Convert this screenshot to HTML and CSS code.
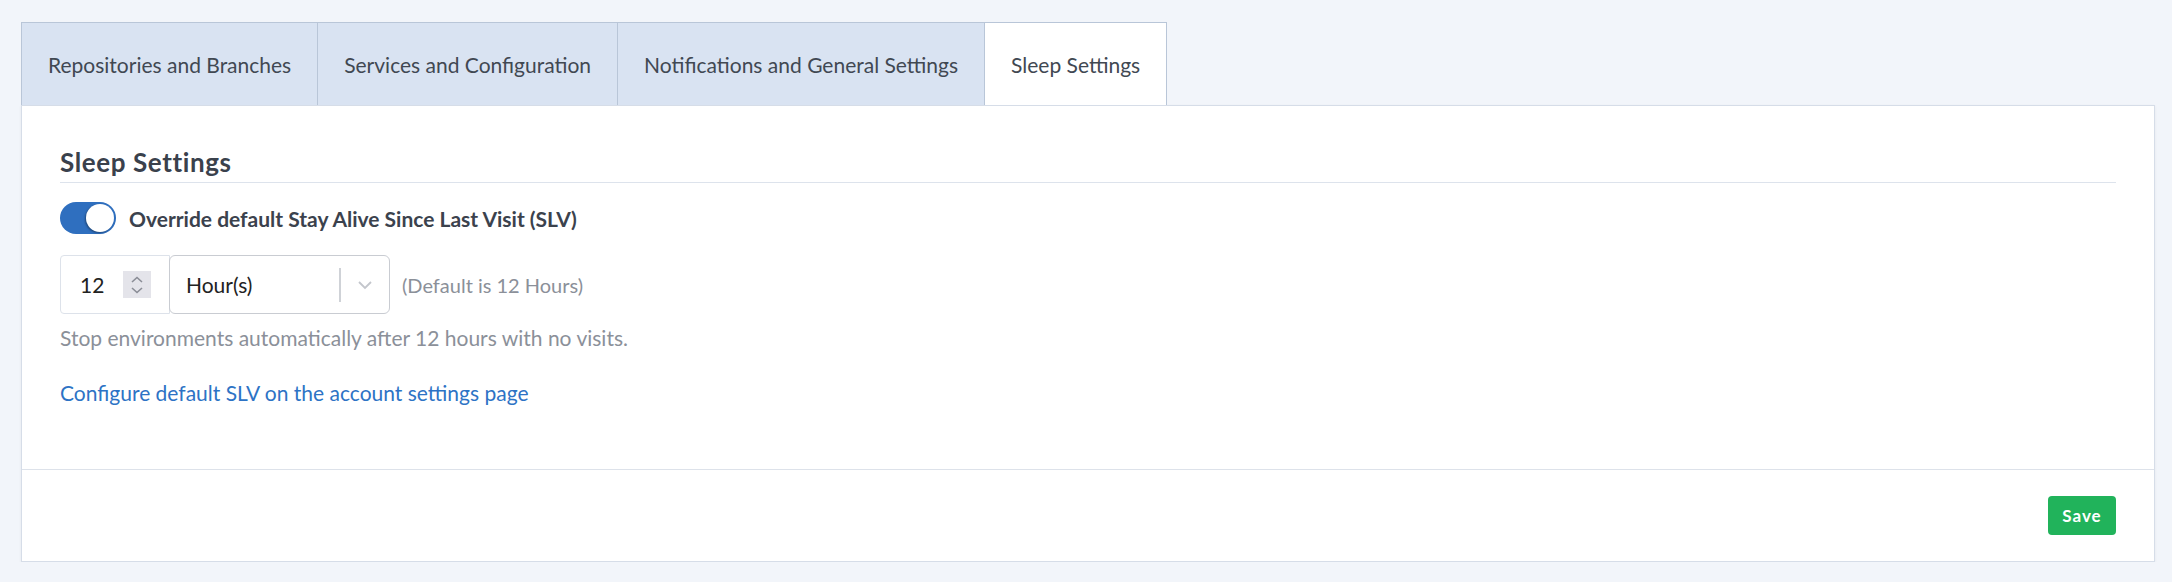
FILE: index.html
```html
<!DOCTYPE html>
<html lang="en">
<head>
  <meta charset="UTF-8">
  <title>Environment Settings</title>
  <link rel="stylesheet" href="styles.css">
</head>
<body>

  <div class="pagina">
    <div class="abas">
      <div class="aba">Repositories and Branches</div>
      <div class="aba">Services and Configuration</div>
      <div class="aba">Notifications and General Settings</div>
      <div class="aba ativa">Sleep Settings</div>
    </div>

    <div class="cartao">
      <div class="corpo">
        <h2 class="titulo">Sleep Settings</h2>

        <label class="linha-toggle">
          <span class="toggle"><span class="bolinha"></span></span>
          <span class="rotulo">Override default Stay Alive Since Last Visit (SLV)</span>
        </label>

        <div class="linha-campos">
          <div class="numero">
            <span class="valor">12</span>
            <span class="spinner">
              <svg width="16" height="22" viewBox="0 0 16 22">
                <path d="M3 8 L8 3.5 L13 8" fill="none" stroke="#8a8d96" stroke-width="1.6"/>
                <path d="M3 14 L8 18.5 L13 14" fill="none" stroke="#8a8d96" stroke-width="1.6"/>
              </svg>
            </span>
          </div>
          <div class="selecao">
            <span class="opcao">Hour(s)</span>
            <span class="separador"></span>
            <span class="seta">
              <svg width="16" height="10" viewBox="0 0 16 10">
                <path d="M2 2 L8 8 L14 2" fill="none" stroke="#c3c6cc" stroke-width="1.8"/>
              </svg>
            </span>
          </div>
          <span class="padrao">(Default is 12 Hours)</span>
        </div>

        <p class="ajuda">Stop environments automatically after 12 hours with no visits.</p>

        <a class="link" href="#">Configure default SLV on the account settings page</a>
      </div>

      <div class="rodape">
        <button class="btn-salvar">Save</button>
      </div>
    </div>
  </div>

</body>
</html>
```

FILE: styles.css
```css
body {
  font-family: Lato, "Open Sans", sans-serif;
  background: #f2f5fa;
  margin: 0;
  color: #3d4450;
}
.pagina {
  padding: 22px 17px 0 21px;
}

/* abas do topo */
.abas {
  display: flex;
}
.aba {
  height: 83px;
  padding: 0 26px;
  display: flex;
  align-items: center;
  background: #d9e3f2;
  border: 1px solid #b9c6d8;
  border-bottom: none;
  margin-right: -1px;
  font-size: 21px;
  color: #414852;
  box-sizing: border-box;
  white-space: nowrap;
}
.aba.ativa {
  background: white;
}

/* cartão */
.cartao {
  background: white;
  border: 1px solid #d6dde8;
  box-shadow: 0 1px 3px rgba(0,0,0,0.06);
}
.corpo {
  padding: 40px 38px 64px 38px;
}
.titulo {
  font-size: 26px;
  font-weight: 700;
  letter-spacing: 0.6px;
  line-height: 32px;
  margin: 0;
  padding-bottom: 4px;
  border-bottom: 1px solid #dde3ec;
  color: #3a414c;
}
.linha-toggle {
  display: flex;
  align-items: center;
  margin-top: 19px;
  height: 32px;
}
.toggle {
  width: 56px;
  height: 32px;
  border-radius: 16px;
  background: #2f6fbf;
  position: relative;
  flex-shrink: 0;
}
.toggle .bolinha {
  position: absolute;
  right: 2px;
  top: 2px;
  width: 28px;
  height: 28px;
  border-radius: 50%;
  background: white;
  box-shadow: -1px 1px 2px rgba(0,0,0,0.35);
}
.rotulo {
  margin-left: 13px;
  font-size: 21px;
  font-weight: 700;
  color: #3b424d;
}

/* campos de tempo */
.linha-campos {
  display: flex;
  align-items: center;
  margin-top: 21px;
}
.numero {
  width: 110px;
  height: 59px;
  box-sizing: border-box;
  border: 1px solid #dde2ea;
  border-radius: 4px 0 0 4px;
  display: flex;
  align-items: center;
  padding-left: 19px;
}
.numero .valor {
  font-size: 21px;
  color: #222;
  width: 43px;
}
.spinner {
  width: 28px;
  height: 27px;
  background: #e4e4ea;
  display: flex;
  align-items: center;
  justify-content: center;
}
.selecao {
  width: 221px;
  height: 59px;
  box-sizing: border-box;
  border: 1px solid #c9ccd2;
  border-radius: 6px;
  display: flex;
  align-items: center;
  padding-left: 16px;
  margin-left: -1px;
}
.selecao .opcao {
  font-size: 21px;
  color: #222;
  flex: 1;
}
.separador {
  width: 2px;
  height: 34px;
  background: #cfd2d7;
}
.seta {
  width: 48px;
  display: flex;
  justify-content: center;
}
.padrao {
  margin-left: 12px;
  font-size: 20px;
  color: #8b9099;
}
.ajuda {
  margin: 12px 0 0 0;
  font-size: 21px;
  line-height: 24px;
  color: #8b9099;
}
.link {
  display: block;
  margin-top: 31px;
  font-size: 21px;
  line-height: 24px;
  color: #2d73c5;
  text-decoration: none;
}

/* rodapé com botão */
.rodape {
  border-top: 1px solid #dde2ea;
  height: 91px;
  display: flex;
  align-items: center;
  justify-content: flex-end;
  padding-right: 38px;
}
.btn-salvar {
  width: 68px;
  height: 39px;
  background-color: #21b35b;
  color: white;
  font-family: Lato, sans-serif;
  font-weight: 700;
  font-size: 17px;
  letter-spacing: 1px;
  border: none;
  border-radius: 4px;
  cursor: pointer;
}
```
